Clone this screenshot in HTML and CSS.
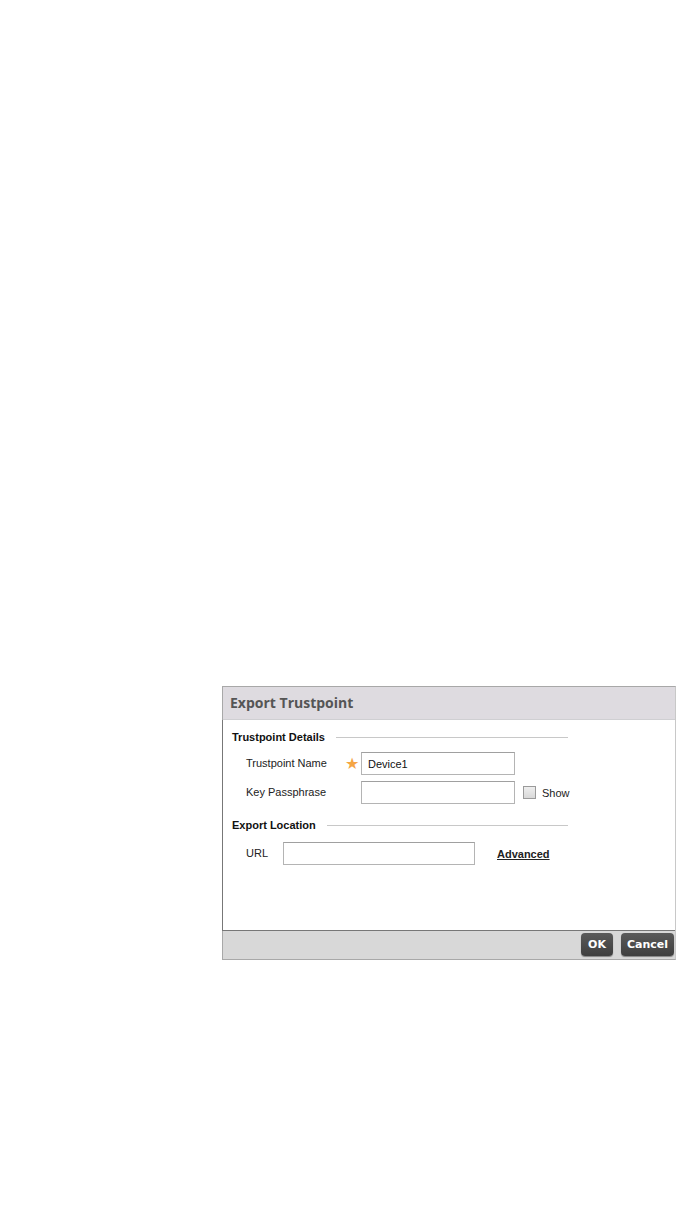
FILE: index.html
```html
<!DOCTYPE html>
<html lang="en">
<head>
  <meta charset="UTF-8">
  <title>Export Trustpoint</title>
  <link rel="stylesheet" href="styles.css">
</head>
<body>
  <div class="page">
    <div class="dialog">
      <div class="dialog-header">Export Trustpoint</div>

      <div class="dialog-body">
        <div class="section-title"><span>Trustpoint Details</span><div class="section-line"></div></div>

        <div class="form-row first">
          <span class="form-label">Trustpoint Name</span>
          <span class="required">&#9733;</span>
          <div class="text-input name-input">Device1</div>
        </div>

        <div class="form-row">
          <span class="form-label">Key Passphrase</span>
          <span class="required"></span>
          <div class="text-input name-input"></div>
          <span class="checkbox"></span>
          <span class="check-label">Show</span>
        </div>

        <div class="section-title location"><span>Export Location</span><div class="section-line"></div></div>

        <div class="form-row url-row">
          <span class="form-label url-label">URL</span>
          <div class="text-input url-input"></div>
          <a class="advanced-link">Advanced</a>
        </div>
      </div>

      <div class="dialog-footer">
        <button class="btn btn-ok">OK</button>
        <button class="btn btn-cancel">Cancel</button>
      </div>
    </div>
  </div>
</body>
</html>
```

FILE: styles.css
```css
body {
  margin: 0;
  background: #fff;
  font-family: Tahoma, "DejaVu Sans", "Liberation Sans", sans-serif;
}

.page {
  padding-top: 686px;
  padding-left: 222px;
}

.dialog {
  width: 452px;
  border: 1px solid #a8a8a8;
  border-right-color: #c8c8c8;
  background: #fff;
}

.dialog-header {
  height: 32px;
  line-height: 31px;
  padding-left: 7px;
  background: #dedbe0;
  border-bottom: 1px solid #cfcfd2;
  color: #555;
  font-family: "Open Sans", "Liberation Sans", sans-serif;
  font-weight: bold;
  font-size: 14px;
}

/* 表单区域 */
.dialog-body {
  height: 200px;
  padding: 10px 0 0 9px;
  border-left: 1px solid #777;
  border-bottom: 1px solid #777;
  margin-left: -1px;
  font-family: "Liberation Sans", Arial, sans-serif;
  font-size: 11px;
  color: #222;
}

.section-title {
  display: flex;
  align-items: center;
  width: 336px;
  font-weight: bold;
  font-size: 11px;
  color: #111;
  height: 14px;
}

.section-title span {
  margin-right: 11px;
  white-space: nowrap;
}

.section-line {
  flex: 1;
  height: 1px;
  background: #c8c8c8;
}

.section-title.location {
  margin-top: 14px;
}

.form-row {
  display: flex;
  align-items: center;
  height: 23px;
  margin-left: 14px;
  margin-top: 6px;
}

.form-row.first {
  margin-top: 8px;
}

.form-label {
  width: 99px;
  padding-bottom: 2px;
}

.required {
  width: 16px;
  color: #f5a544;
  font-size: 16px;
  line-height: 16px;
  padding-top: 1px;
}

.text-input {
  box-sizing: border-box;
  height: 23px;
  border: 1px solid #b4b4b4;
  border-top-color: #a0a0a0;
  padding: 5px 0 0 6px;
  font-size: 11px;
  color: #111;
}

.name-input {
  width: 154px;
}

.checkbox {
  box-sizing: border-box;
  width: 13px;
  height: 13px;
  margin-left: 8px;
  border: 1px solid #9a9a9a;
  background: linear-gradient(#eee, #d8d8d8);
}

.check-label {
  margin-left: 6px;
  padding-top: 1px;
}

.url-row {
  margin-top: 10px;
}

.url-label {
  width: 37px;
}

.url-input {
  width: 192px;
}

.advanced-link {
  margin-left: 22px;
  font-weight: bold;
  text-decoration: underline;
  color: #222;
  font-size: 11px;
}

.dialog-footer {
  display: flex;
  justify-content: flex-end;
  gap: 8px;
  height: 26px;
  padding: 2px 1px 0 0;
  background: #d8d8d8;
}

.btn {
  height: 23px;
  border: none;
  border-radius: 4px;
  background: linear-gradient(#5a5a5a, #3e3e3e);
  color: #fff;
  font-family: "DejaVu Sans", Verdana, sans-serif;
  font-weight: bold;
  font-size: 11px;
  padding: 0 6px;
  box-shadow: 0 1px 1px rgba(0, 0, 0, 0.4);
}

.btn-ok {
  width: 32px;
  padding: 0;
}

.btn-cancel {
  width: 53px;
}
```
